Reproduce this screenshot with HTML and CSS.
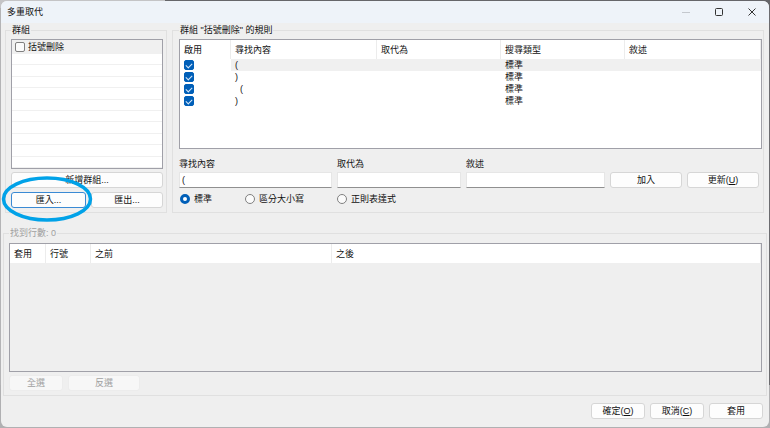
FILE: index.html
```html
<!DOCTYPE html>
<html lang="zh-Hant">
  <head>
    <meta charset="utf-8">
    <meta name="viewport" content="width=device-width, initial-scale=1">
    <title>多重取代</title>
    <link rel="stylesheet" href="styles.css">
  </head>
  <body>
    <form class="window">
      <header class="titlebar">
        <h1 class="titlebar__title">多重取代</h1>
        <button type="button" class="titlebar__button" aria-label="最小化" disabled>
          <svg width="10" height="10" viewBox="0 0 10 10"><path d="M1 5.5H9" stroke="#c4c8ce"/></svg>
        </button>
        <button type="button" class="titlebar__button" aria-label="最大化">
          <svg width="10" height="10" viewBox="0 0 10 10"><rect x="1.5" y="1.5" width="7" height="7" rx="1" fill="none" stroke="#333"/></svg>
        </button>
        <button type="button" class="titlebar__button" aria-label="關閉">
          <svg width="10" height="10" viewBox="0 0 10 10"><path d="M1.5 1.5L8.5 8.5M8.5 1.5L1.5 8.5" stroke="#333"/></svg>
        </button>
      </header>

      <main class="content">
        <div class="top">
          <fieldset class="group groups">
            <legend>群組</legend>
            <ul class="group-list">
              <li class="selected"><label><input type="checkbox" class="check"> 括號刪除</label></li>
              <li></li><li></li><li></li><li></li><li></li>
              <li></li><li></li><li></li><li></li><li></li>
            </ul>
            <button type="button" class="button">新增群組...</button>
            <div class="button-pair">
              <div class="marked">
                <button type="button" class="button button--focus">匯入...</button>
                <svg class="marked__ring" viewBox="0 0 92 48"><ellipse cx="46" cy="24" rx="43.5" ry="21" fill="none" stroke="#00a2e8" stroke-width="3.5"/></svg>
              </div>
              <button type="button" class="button">匯出...</button>
            </div>
          </fieldset>

          <fieldset class="group rules">
            <legend>群組 "括號刪除" 的規則</legend>
            <div class="table-box rules__box">
              <table class="table">
                <colgroup>
                  <col class="col-enabled"><col class="col-find"><col class="col-replace"><col class="col-type"><col>
                </colgroup>
                <thead>
                  <tr><th>啟用</th><th>尋找內容</th><th>取代為</th><th>搜尋類型</th><th>敘述</th></tr>
                </thead>
                <tbody>
                  <tr class="selected">
                    <td><input type="checkbox" class="check" aria-label="啟用" checked></td><td>(</td><td></td><td>標準</td><td></td>
                  </tr>
                  <tr>
                    <td><input type="checkbox" class="check" aria-label="啟用" checked></td><td>)</td><td></td><td>標準</td><td></td>
                  </tr>
                  <tr>
                    <td><input type="checkbox" class="check" aria-label="啟用" checked></td><td>&nbsp; (</td><td></td><td>標準</td><td></td>
                  </tr>
                  <tr>
                    <td><input type="checkbox" class="check" aria-label="啟用" checked></td><td>)</td><td></td><td>標準</td><td></td>
                  </tr>
                </tbody>
              </table>
            </div>

            <div class="editor">
              <label for="find">尋找內容</label>
              <label for="replace">取代為</label>
              <label for="description">敘述</label>
              <input class="textbox" id="find" type="text" value="(">
              <input class="textbox" id="replace" type="text">
              <input class="textbox" id="description" type="text">
              <button type="button" class="button">加入</button>
              <button type="button" class="button">更新(<u>U</u>)</button>
            </div>

            <div class="modes">
              <label><input type="radio" name="mode" class="radio" checked> 標準</label>
              <label><input type="radio" name="mode" class="radio"> 區分大小寫</label>
              <label><input type="radio" name="mode" class="radio"> 正則表達式</label>
            </div>
          </fieldset>
        </div>

        <fieldset class="group found">
          <legend>找到行數: 0</legend>
          <div class="table-box found__box">
            <table class="table">
              <colgroup>
                <col class="col-apply"><col class="col-line"><col class="col-before"><col>
              </colgroup>
              <thead>
                <tr><th>套用</th><th>行號</th><th>之前</th><th>之後</th></tr>
              </thead>
            </table>
          </div>
          <div class="found__buttons">
            <button type="button" class="button" disabled>全選</button>
            <button type="button" class="button button--wide" disabled>反選</button>
          </div>
        </fieldset>
      </main>

      <footer class="footer">
        <button type="button" class="button">確定(<u>O</u>)</button>
        <button type="button" class="button">取消(<u>C</u>)</button>
        <button type="button" class="button">套用</button>
      </footer>
    </form>
  </body>
</html>
```
FILE: styles.css
```css
* { box-sizing: border-box; }

body {
  margin: 0;
  background: linear-gradient(to right, #c4c4c6 165px, #66666a 165px) top / 100% 8px no-repeat,
    linear-gradient(to right, #b4b4b6 50%, #6c6c70 50%) top / 100% 90% no-repeat,
    #b0b0b2;
}

body, button, input {
  font-family: "Liberation Sans", "Noto Sans CJK TC", sans-serif;
  font-size: 9px;
  line-height: 12px;
  color: #111;
}

.window {
  display: flex;
  flex-direction: column;
  height: 100vh;
  min-height: 340px;
  border: 1px solid transparent;
  border-radius: 7px;
  background: #efefef padding-box;
}

/* title bar */
.titlebar {
  display: flex;
  align-items: center;
  height: 22px;
  padding: 0 1px 0 6px;
  border-radius: 6px 6px 0 0;
  background: #eef3f9;
}
.titlebar__title {
  flex: 1;
  margin: 0;
  font-size: 9px;
  font-weight: normal;
}
.titlebar__button {
  display: flex;
  align-items: center;
  justify-content: center;
  width: 33px;
  height: 20px;
  padding: 0;
  border: 0;
  background: none;
}

.content {
  flex: 1;
  display: flex;
  flex-direction: column;
  gap: 14px;
  padding: 1px 2px 0;
}
.top {
  display: flex;
  gap: 5px;
  padding: 0 3px 0 2px;
}

/* group boxes */
.group {
  display: flex;
  flex-direction: column;
  min-width: 0;
  margin: 0;
  padding: 3px 3px 4px 5px;
  border: 1px solid #e0e0e0;
}
.group legend { padding: 0 1px; }
.groups { width: 162px; }
.rules { flex: 1; padding: 3px 1px 3px 6px; }
.found { flex: 1; padding: 4px 4px 4px 5px; }
.found legend { color: #a0a0a0; }

/* group list */
.group-list {
  display: grid;
  grid-template-rows: 14px repeat(10, 1fr);
  height: 130px;
  margin: 0 0 3px;
  padding: 0;
  border: 1px solid #a0a0a8;
  background: #fff;
  list-style: none;
  overflow: hidden;
}
.group-list li { border-bottom: 1px solid #f0f0f0; }
.group-list label {
  display: flex;
  align-items: center;
  gap: 3px;
  padding: 1px 0 0 3px;
}
.group-list .selected, .table .selected td { background: #f0f0f0; }

/* buttons */
.button {
  height: 16px;
  padding: 0;
  border: 1px solid #d6d6d6;
  border-radius: 3px;
  background: #fdfdfd;
  line-height: 12px;
}
.button:disabled {
  border-color: #ececec;
  background: #f7f7f7;
  color: #a0a0a0;
}
.button--focus { border-color: #3a8ad4; }

.button-pair {
  display: flex;
  gap: 5px;
  margin-top: 4px;
}
.button-pair .button { flex: 1; }
.marked {
  position: relative;
  display: flex;
  width: 75px;
}
.marked__ring {
  position: absolute;
  top: -17px;
  left: -10px;
  width: 92px;
  height: 48px;
  pointer-events: none;
}

/* tables */
.table-box {
  border: 1px solid #a0a0a8;
  background: #fff;
}
.rules__box { height: 110px; }
.found__box { flex: 1; background: #efefef; }

.table {
  width: 100%;
  table-layout: fixed;
  border-collapse: separate;
  border-spacing: 0;
}
.table th {
  height: 19px;
  padding: 0 4px;
  border-right: 1px solid #ececec;
  background: #fff;
  font-weight: normal;
  text-align: left;
}
.table td {
  height: 12px;
  padding: 0 4px;
  line-height: 12px;
  white-space: nowrap;
}
.table .selected td:first-child { background: none; }

.col-enabled { width: 51px; }
.col-find { width: 146px; }
.col-replace, .col-type { width: 124px; }
.col-apply { width: 36px; }
.col-line { width: 45px; }
.col-before { width: 241px; }

/* check boxes and radio buttons */
.check, .radio {
  appearance: none;
  flex: none;
  display: block;
  width: 10px;
  height: 10px;
  margin: 0;
  border: 1px solid #808080;
  background: #fbfbfb;
}
.check { border-radius: 2px; }
.check:checked {
  border-color: #005fb8;
  background: #005fb8;
}
.check:checked::before {
  content: "";
  display: block;
  width: 5px;
  height: 3px;
  margin: 2px 0 0 1px;
  border: solid #d6e8fa;
  border-width: 0 0 1px 1px;
  transform: rotate(-45deg);
}
.radio { border-radius: 50%; }
.radio:checked {
  border: 3px solid #005fb8;
  background: #fff;
}

/* rule editor */
.editor {
  display: grid;
  grid-template-columns: 153fr 124fr 139fr 72fr 72fr;
  gap: 2px 5px;
  margin-top: 9px;
  padding-right: 3px;
}
.editor label:nth-of-type(3) { grid-column: 3 / -1; }
.textbox {
  width: 100%;
  min-width: 0;
  height: 16px;
  padding: 0 2px;
  border: 1px solid #e6e6e6;
  border-bottom-color: #909090;
  background: #fff;
}
.modes {
  display: flex;
  gap: 33px;
  margin-top: 5px;
  padding-left: 1px;
}
.modes label {
  display: flex;
  align-items: center;
  gap: 4px;
}

.found__buttons {
  display: flex;
  gap: 5px;
  margin-top: 3px;
}
.found__buttons .button { width: 54px; }
.found__buttons .button--wide { width: 72px; }

.footer {
  display: flex;
  justify-content: flex-end;
  gap: 5px;
  padding: 7px 6px 8px;
}
.footer .button { width: 54px; }
```
